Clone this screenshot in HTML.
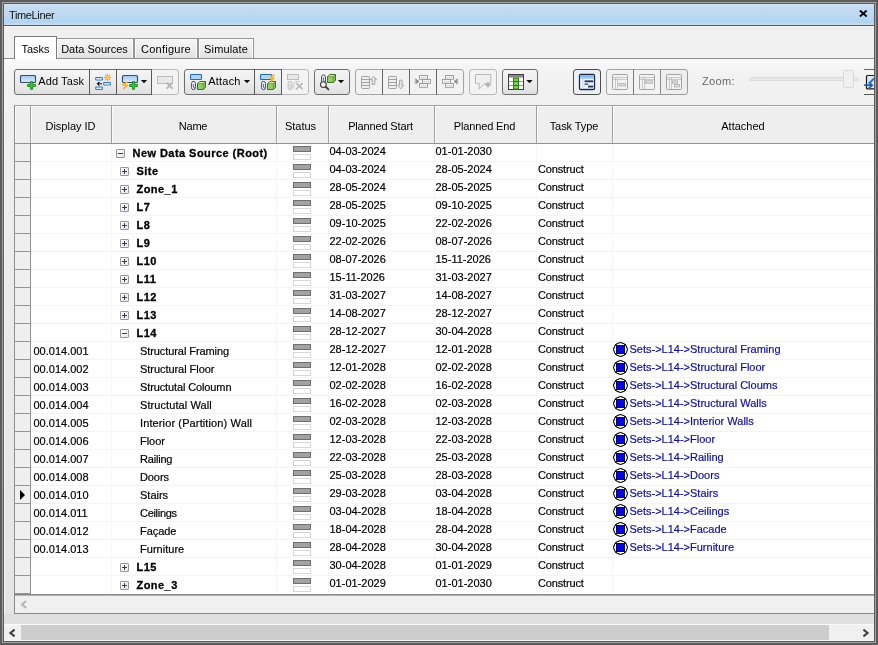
<!DOCTYPE html>
<html><head><meta charset="utf-8"><title>TimeLiner</title>
<style>
*{box-sizing:border-box;margin:0;padding:0}
html,body{width:878px;height:645px;overflow:hidden}
body{position:relative;background:#5c5c5c;font-family:"Liberation Sans",sans-serif;font-size:11px;color:#000}
.abs{position:absolute}
#frame2{position:absolute;left:2px;top:2px;width:874px;height:641px;border:1px solid #a0a0a0}
#frame3{position:absolute;left:3px;top:3px;width:872px;height:639px;border:1px solid #5c5c5c}
#win{position:absolute;left:4px;top:4px;width:870px;height:637px;background:#f0f0f0;overflow:hidden}
#title{position:absolute;left:0;top:0;width:870px;height:21px;background:linear-gradient(#d3e5f7 0,#c5dcf3 2px,#c1d9f1 9px,#b3d3f2 18px,#b7d6f2 19px,#cde0f2 21px)}
#title span{position:absolute;left:5px;top:5px;font-size:11px;letter-spacing:-0.36px;color:#111;white-space:nowrap;will-change:transform}
#tline{position:absolute;left:0;top:21px;width:870px;height:1px;background:#4e5660}
#tline2{position:absolute;left:0;top:22px;width:870px;height:1px;background:#f8f8f8}
/* coordinates below are relative to #root which is page-origin */
#root{position:absolute;left:-4px;top:-4px;width:878px;height:645px;will-change:transform}
.tab{position:absolute;top:38px;height:20px;border:1px solid #969696;border-bottom:none;background:linear-gradient(#f5f5f5,#ebebeb 60%,#e2e2e2);font-size:11px;text-align:center;line-height:21px;white-space:nowrap;box-shadow:inset 1px 1px 0 #fbfbfb,inset -1px 0 0 #fbfbfb}
.tab.act{box-shadow:none;top:36px;height:23px;border-color:#7c7c7c;background:#fff;line-height:25px;z-index:2}
#tabline{position:absolute;left:4px;top:58px;width:870px;height:1px;background:#8e8e8e}
#tabbody{position:absolute;left:4px;top:59px;width:870px;height:555px;background:linear-gradient(#f9f9f9,#f2f2f2 14px,#f0f0f0 46px,#ebebeb 250px,#e5e5e5 555px)}
#lstrip{position:absolute;left:4px;top:59px;width:1px;height:582px;background:#f6f6f6}
.hdr{position:absolute;top:105px;height:39px;border:1px solid #a0a0a0;border-bottom-color:#929292;border-left:none;background:#eee;box-shadow:inset 1px 1px 0 #fbfbfb;text-align:center;line-height:41px;white-space:nowrap;font-size:11px}
#grid{position:absolute;left:31px;top:144px;width:847px;height:450px;background:#fff}
.row{position:absolute;left:0;width:878px;height:18px}
.row .sel{position:absolute;left:14px;top:0;width:17px;height:18px;background:#efefef;border-left:1px solid #909090;border-right:1px solid #909090;border-bottom:1px solid #949494}
.t{position:absolute;white-space:nowrap;font-size:11px;line-height:13px;-webkit-text-stroke:0.2px}
.t.d{top:1px}
.t.id{left:33.5px;top:3px}
.t.nm{top:3px}
.t.b{font-weight:bold;letter-spacing:0.45px;-webkit-text-stroke:0.3px;margin-left:-0.5px}
.t.att{left:629.5px;color:#10109a}
.vline{position:absolute;top:144px;width:1px;height:450px;background:#f5f5f5}
.hline{position:absolute;left:31px;width:847px;height:1px;background:#f4f4f4}
.st1{position:absolute;left:293px;top:2px;width:18px;height:6px;background:#a2a2a2;border:1px solid #6e6e6e}
.st2{position:absolute;left:293px;top:10px;width:18px;height:6px;background:#fff;border:1px solid #d6d6d6}
.box{position:absolute;top:5px;width:9px;height:9px;border:1px solid #969696;background:linear-gradient(135deg,#fff,#e4e4ec);border-radius:1px}
.box:before{content:"";position:absolute;left:1px;top:3px;width:5px;height:1px;background:#3a3a4a}
.box.plus:after{content:"";position:absolute;left:3px;top:1px;width:1px;height:5px;background:#3a3a4a}
.cur{position:absolute;left:20px;top:4px;width:0;height:0;border-left:5px solid #000;border-top:5px solid transparent;border-bottom:5px solid transparent}
.seti{position:absolute;left:613px;top:0px;width:15px;height:15px;border-radius:50%;background:radial-gradient(circle at 7.5px 7.5px,#fff 0,#fff 5.9px,#161616 6.4px,#161616 7.1px,rgba(22,22,22,0) 7.7px)}
.seti:after{content:"";position:absolute;box-sizing:border-box;left:3px;top:3px;width:9px;height:9px;background:#0606e0;border:1px solid #0c0c48}
</style></head><body>
<div id="frame2"></div><div id="frame3"></div>
<div id="win">
<div id="title"><span>TimeLiner</span>
<svg class="abs" style="left:853px;top:5px" width="11" height="11" viewBox="0 0 11 11"><path d="M2.9 1.5L9.7 7.5M9.7 1.5L2.9 7.5" stroke="#0c0c0c" stroke-width="1.9" fill="none"/></svg>
</div>
<div id="tline"></div><div id="tline2"></div>
<div id="root">
<div id="tabline"></div>
<div id="tabbody"></div><div id="lstrip"></div>
<div class="tab act" style="left:14px;width:43px">Tasks</div>
<div class="tab" style="left:56px;width:78px;padding-right:1px">Data Sources</div>
<div class="tab" style="left:134px;width:64px;letter-spacing:0.25px">Configure</div>
<div class="tab" style="left:198px;width:56px;letter-spacing:0.12px">Simulate</div>
<svg class="abs" style="left:0;top:62px" width="878" height="40" viewBox="0 62 878 40">
<defs>
<linearGradient id="gb" x1="0" y1="0" x2="0" y2="1"><stop offset="0" stop-color="#f5f5f5"/><stop offset="0.5" stop-color="#ececec"/><stop offset="1" stop-color="#dfdfdf"/></linearGradient>
<linearGradient id="gp" x1="0" y1="0" x2="0" y2="1"><stop offset="0" stop-color="#e9eef6"/><stop offset="0.5" stop-color="#f1f3f7"/><stop offset="1" stop-color="#ececf0"/></linearGradient>
<linearGradient id="gblue" x1="0" y1="0" x2="0" y2="1"><stop offset="0" stop-color="#9cc6f2"/><stop offset="1" stop-color="#e2eefa"/></linearGradient>
<linearGradient id="ggreen" x1="0" y1="0" x2="1" y2="1"><stop offset="0" stop-color="#a8d47c"/><stop offset="1" stop-color="#5c9a32"/></linearGradient>
</defs>
<path d="M17.1 69.5H151.5V94.5H17.1Q14.5 94.5 14.5 91.9V72.1Q14.5 69.5 17.1 69.5Z" fill="url(#gb)" stroke="#6c6c6c"/>
<path d="M151.5 69.5H175.9Q178.5 69.5 178.5 72.1V91.9Q178.5 94.5 175.9 94.5H151.5V69.5Z" fill="#f3f3f3" stroke="#b8b8b8"/>
<rect x="151" y="69" width="1" height="26" fill="#5a5a5a"/>
<rect x="89" y="69" width="1" height="26" fill="#5a5a5a"/>
<rect x="116" y="69" width="1" height="26" fill="#5a5a5a"/>
<rect x="20.5" y="75.5" width="15" height="7" rx="1" fill="url(#gblue)" stroke="#30507c" stroke-width="1.2"/>
<path d="M30.4 81.5h2.2v2.8h2.8v2.2h-2.8v2.8h-2.2v-2.8h-2.8v-2.2h2.8Z" fill="#35c435" stroke="#1c8c1c" stroke-width="0.9" stroke-linejoin="round"/>
<text x="38.2" y="85" font-family="Liberation Sans, sans-serif" font-size="11" letter-spacing="0.12" fill="#000">Add Task</text>
<rect x="95.2" y="77.1" width="7.700000000000003" height="3.4000000000000057" rx="1" fill="#3474c0"/><rect x="96.2" y="78.0" width="5.700000000000003" height="1.6000000000000056" fill="#d8ecfe"/>
<rect x="103.2" y="82.1" width="7.700000000000003" height="3.4000000000000057" rx="1" fill="#3474c0"/><rect x="104.2" y="83.0" width="5.700000000000003" height="1.6000000000000056" fill="#d8ecfe"/>
<rect x="95.2" y="86.6" width="7.700000000000003" height="3.4000000000000057" rx="1" fill="#3474c0"/><rect x="96.2" y="87.5" width="5.700000000000003" height="1.6000000000000056" fill="#d8ecfe"/>
<path d="M102 83.8H97.6M99.4 82L97.4 83.8L99.4 85.6" stroke="#111" stroke-width="1.1" fill="none"/>
<g stroke="#f39c1f" stroke-width="1.1" stroke-linecap="round"><path d="M107.6 74.2V80.8M104.3 77.5H110.9M105.3 75.2L109.9 79.8M109.9 75.2L105.3 79.8"/></g><circle cx="107.6" cy="77.5" r="1.3" fill="#ffe08a"/>
<rect x="122.5" y="75.5" width="15" height="7" rx="1" fill="url(#gblue)" stroke="#30507c" stroke-width="1.2"/>
<path d="M127.4 81.8L122.8 85H127.2L123.2 88.8" fill="none" stroke="#f7b02c" stroke-width="1.6" stroke-linejoin="round"/>
<path d="M132.4 81.5h2.2v2.8h2.8v2.2h-2.8v2.8h-2.2v-2.8h-2.8v-2.2h2.8Z" fill="#35c435" stroke="#1c8c1c" stroke-width="0.9" stroke-linejoin="round"/>
<path d="M140.8 80H147.2L144 83.3Z" fill="#111"/>
<rect x="157.5" y="76.5" width="15" height="7" fill="#e9e9e9" stroke="#bcbcbc"/>
<path d="M166.6 82.6L172.6 88.6M172.6 82.6L166.6 88.6" stroke="#b6b6b6" stroke-width="1.7"/>
<path d="M187.1 69.5H281.5V94.5H187.1Q184.5 94.5 184.5 91.9V72.1Q184.5 69.5 187.1 69.5Z" fill="url(#gb)" stroke="#6c6c6c"/>
<path d="M281.5 69.5H305.9Q308.5 69.5 308.5 72.1V91.9Q308.5 94.5 305.9 94.5H281.5V69.5Z" fill="#f3f3f3" stroke="#b8b8b8"/>
<rect x="254" y="69" width="1" height="26" fill="#5a5a5a"/>
<rect x="281" y="69" width="1" height="26" fill="#5a5a5a"/>
<rect x="190.5" y="74.5" width="11" height="5" rx="0.8" fill="#acd6fa" stroke="#2c68a6" stroke-width="1.1"/>
<path d="M191.6 83.3a1.9 1.9 0 0 1 3.8 0V87.7a1.9 1.9 0 0 1 -3.8 0Z" fill="#fdfdff" stroke="#2c4874" stroke-width="1.0"/>
<path d="M193.4 84.2V87.1a0.9 0.9 0 0 0 1.6 0.5" fill="none" stroke="#2c5a9a" stroke-width="0.9" stroke-linecap="round"/>
<path d="M197.5 83.7L199.7 81.5H205.5L203.3 83.7Z" fill="#c6e8a8"/>
<path d="M203.3 83.7L205.5 81.5V87.3L203.3 89.5Z" fill="#84be54"/>
<rect x="197.5" y="83.7" width="5.8" height="5.8" fill="#96cc68"/>
<path d="M197.5 83.7L199.7 81.5H205.5V87.3L203.3 89.5H197.5Z" fill="none" stroke="#387620" stroke-width="1.0" stroke-linejoin="round"/>
<path d="M197.5 83.7H203.3V89.5M203.3 83.7L205.5 81.5" fill="none" stroke="#387620" stroke-width="0.7" opacity="0.8"/>
<text x="208.3" y="85" font-family="Liberation Sans, sans-serif" font-size="11" letter-spacing="0.2" fill="#000">Attach</text>
<path d="M243.8 80H250.2L247 83.3Z" fill="#111"/>
<rect x="260.5" y="74.5" width="11" height="5" rx="0.8" fill="#acd6fa" stroke="#2c68a6" stroke-width="1.1"/>
<path d="M261.6 83.3a1.9 1.9 0 0 1 3.8 0V87.7a1.9 1.9 0 0 1 -3.8 0Z" fill="#fdfdff" stroke="#2c4874" stroke-width="1.0"/>
<path d="M263.4 84.2V87.1a0.9 0.9 0 0 0 1.6 0.5" fill="none" stroke="#2c5a9a" stroke-width="0.9" stroke-linecap="round"/>
<path d="M267.5 83.7L269.7 81.5H275.5L273.3 83.7Z" fill="#c6e8a8"/>
<path d="M273.3 83.7L275.5 81.5V87.3L273.3 89.5Z" fill="#84be54"/>
<rect x="267.5" y="83.7" width="5.8" height="5.8" fill="#96cc68"/>
<path d="M267.5 83.7L269.7 81.5H275.5V87.3L273.3 89.5H267.5Z" fill="none" stroke="#387620" stroke-width="1.0" stroke-linejoin="round"/>
<path d="M267.5 83.7H273.3V89.5M273.3 83.7L275.5 81.5" fill="none" stroke="#387620" stroke-width="0.7" opacity="0.8"/>
<path d="M274.4 74.4L270.2 78.2H273.8L271.2 81.4" fill="none" stroke="#f4b832" stroke-width="1.9" stroke-linejoin="round"/>
<rect x="287.5" y="74.5" width="11" height="5" fill="#e9e9e9" stroke="#bcbcbc"/>
<path d="M288.1 83.3a1.9 1.9 0 0 1 3.8 0V87.7a1.9 1.9 0 0 1 -3.8 0Z" fill="#f4f4f4" stroke="#b8b8b8" stroke-width="1.0"/>
<path d="M289.9 84.2V87.1a0.9 0.9 0 0 0 1.6 0.5" fill="none" stroke="#c0c0c0" stroke-width="0.9" stroke-linecap="round"/>
<path d="M296.2 83.2L302.6 89.2M302.6 83.2L296.2 89.2" stroke="#b8b8b8" stroke-width="1.7"/><path d="M300 81.5H296Q293.4 82 293.6 85.5Q293.6 88.5 295 89.5" stroke="#c8c8c8" fill="none"/>
<path d="M317.1 69.5H346.9Q349.5 69.5 349.5 72.1V91.9Q349.5 94.5 346.9 94.5H317.1Q314.5 94.5 314.5 91.9V72.1Q314.5 69.5 317.1 69.5Z" fill="url(#gb)" stroke="#6c6c6c"/>
<path d="M321.6 76.8a1.9 1.9 0 0 1 3.8 0V81.2a1.9 1.9 0 0 1 -3.8 0Z" fill="#fdfdff" stroke="#2c4874" stroke-width="1.0"/>
<path d="M323.4 77.7V80.6a0.9 0.9 0 0 0 1.6 0.5" fill="none" stroke="#2c5a9a" stroke-width="0.9" stroke-linecap="round"/>
<path d="M327.5 76.7L329.7 74.5H335.5L333.3 76.7Z" fill="#c6e8a8"/>
<path d="M333.3 76.7L335.5 74.5V80.3L333.3 82.5Z" fill="#84be54"/>
<rect x="327.5" y="76.7" width="5.8" height="5.8" fill="#96cc68"/>
<path d="M327.5 76.7L329.7 74.5H335.5V80.3L333.3 82.5H327.5Z" fill="none" stroke="#387620" stroke-width="1.0" stroke-linejoin="round"/>
<path d="M327.5 76.7H333.3V82.5M333.3 76.7L335.5 74.5" fill="none" stroke="#387620" stroke-width="0.7" opacity="0.8"/>
<circle cx="323.4" cy="84.6" r="2.9" fill="#f6f6fa" stroke="#3a3a3a" stroke-width="1.1"/><path d="M325.8 86.9L328.4 89.4" stroke="#3a3a3a" stroke-width="1.9" stroke-linecap="round"/>
<path d="M337.8 80H344.2L341 83.3Z" fill="#111"/>
<path d="M358.1 69.5H460.9Q463.5 69.5 463.5 72.1V91.9Q463.5 94.5 460.9 94.5H358.1Q355.5 94.5 355.5 91.9V72.1Q355.5 69.5 358.1 69.5Z" fill="#f2f2f2" stroke="#a4a4a4"/>
<rect x="382" y="69" width="1" height="26" fill="#666"/>
<rect x="409" y="69" width="1" height="26" fill="#666"/>
<rect x="436" y="69" width="1" height="26" fill="#666"/>
<rect x="361.5" y="76.5" width="8" height="12" rx="0.8" fill="#efefef" stroke="#a2a2a2"/>
<rect x="362" y="79" width="7" height="1" fill="#a2a2a2"/>
<rect x="362" y="82" width="7" height="1" fill="#a2a2a2"/>
<rect x="362" y="85" width="7" height="1" fill="#a2a2a2"/>
<path d="M373.5 76.2L376.6 79.7H374.8V84.5H372.2V79.7H370.4Z" fill="#e6e6e6" stroke="#a2a2a2" stroke-width="0.9" stroke-linejoin="round"/>
<rect x="388.5" y="76.5" width="8" height="12" rx="0.8" fill="#efefef" stroke="#a2a2a2"/>
<rect x="389" y="79" width="7" height="1" fill="#a2a2a2"/>
<rect x="389" y="82" width="7" height="1" fill="#a2a2a2"/>
<rect x="389" y="85" width="7" height="1" fill="#a2a2a2"/>
<path d="M400.8 88.8L403.8 85.2H402.1V80.2H399.5V85.2H397.8Z" fill="#e6e6e6" stroke="#a2a2a2" stroke-width="0.9" stroke-linejoin="round"/>
<rect x="419.5" y="75.5" width="8" height="3.8" fill="#f3f3f3" stroke="#989898" stroke-width="0.9"/>
<path d="M421 77.4H426" stroke="#c4c4c4" stroke-width="0.8" stroke-dasharray="1.2 0.8"/>
<rect x="422.5" y="79.5" width="8" height="3.8" fill="#f3f3f3" stroke="#989898" stroke-width="0.9"/>
<path d="M424 81.4H429" stroke="#c4c4c4" stroke-width="0.8" stroke-dasharray="1.2 0.8"/>
<rect x="419.5" y="83.5" width="8" height="3.8" fill="#f3f3f3" stroke="#989898" stroke-width="0.9"/>
<path d="M421 85.4H426" stroke="#c4c4c4" stroke-width="0.8" stroke-dasharray="1.2 0.8"/>
<path d="M414.4 81.4L416 81.4M415.6 79L419 81.4L415.6 83.8L416.4 81.4Z" fill="#8a8a8a" stroke="#8a8a8a" stroke-width="0.8" stroke-linejoin="round"/>
<rect x="445.5" y="75.5" width="8" height="3.8" fill="#f3f3f3" stroke="#989898" stroke-width="0.9"/>
<path d="M447 77.4H452" stroke="#c4c4c4" stroke-width="0.8" stroke-dasharray="1.2 0.8"/>
<rect x="442.5" y="79.5" width="8" height="3.8" fill="#f3f3f3" stroke="#989898" stroke-width="0.9"/>
<path d="M444 81.4H449" stroke="#c4c4c4" stroke-width="0.8" stroke-dasharray="1.2 0.8"/>
<rect x="445.5" y="83.5" width="8" height="3.8" fill="#f3f3f3" stroke="#989898" stroke-width="0.9"/>
<path d="M447 85.4H452" stroke="#c4c4c4" stroke-width="0.8" stroke-dasharray="1.2 0.8"/>
<path d="M458.6 81.4L457 81.4M457.4 79L454 81.4L457.4 83.8L456.6 81.4Z" fill="#8a8a8a" stroke="#8a8a8a" stroke-width="0.8" stroke-linejoin="round"/>
<path d="M472.1 69.5H493.9Q496.5 69.5 496.5 72.1V91.9Q496.5 94.5 493.9 94.5H472.1Q469.5 94.5 469.5 91.9V72.1Q469.5 69.5 472.1 69.5Z" fill="#f3f3f3" stroke="#b8b8b8"/>
<path d="M475.5 74.5H490.8V83.3H484.8L479.2 89.2V83.3H475.5Z" fill="#f0f0f0" stroke="#b8b8b8" stroke-linejoin="round"/>
<path d="M487.9 82.2V87.6M485.2 84.9H490.6" stroke="#b0b0b0" stroke-width="1.6"/>
<path d="M505.1 69.5H534.9Q537.5 69.5 537.5 72.1V91.9Q537.5 94.5 534.9 94.5H505.1Q502.5 94.5 502.5 91.9V72.1Q502.5 69.5 505.1 69.5Z" fill="url(#gb)" stroke="#6c6c6c"/>
<rect x="508.5" y="74.5" width="15" height="15" fill="#fff" stroke="#3c3c3c"/>
<rect x="509" y="75" width="14" height="2.6" fill="#8a8a8a"/>
<rect x="513.5" y="78" width="5" height="11" fill="#7ccf4f" stroke="#2f7d1a"/>
<path d="M509 81.5H523M509 85.5H523" stroke="#2f6d22" stroke-width="1"/>
<path d="M509 81.5H513M519 81.5H523M509 85.5H513M519 85.5H523" stroke="#9a9a9a" stroke-width="1"/>
<path d="M526.3 80H532.7L529.5 83.3Z" fill="#111"/>
<path d="M576.1 69.5H597.9Q600.5 69.5 600.5 72.1V91.9Q600.5 94.5 597.9 94.5H576.1Q573.5 94.5 573.5 91.9V72.1Q573.5 69.5 576.1 69.5Z" fill="url(#gp)" stroke="#4c4c4c"/>
<rect x="579.5" y="74.5" width="15" height="15" rx="1.2" fill="#fff" stroke="#1a2846" stroke-width="1.3"/>
<rect x="580.2" y="75.2" width="13.6" height="2.6" fill="#86b8f0"/>
<path d="M580.2 78.6H593.8" stroke="#9cc4f2" stroke-width="0.9"/>
<path d="M580.2 81.2H593.8M580.2 83.8H593.8M580.2 86.4H593.8M582.6 78V89M584 78V89" stroke="#b8d4f6" stroke-width="0.6" fill="none"/>
<rect x="584.6" y="80.4" width="8.6" height="1.9" fill="#1d3566"/><rect x="584.6" y="83.6" width="3.6" height="1.3" fill="#2c4a86"/><rect x="588" y="85.6" width="5.2" height="1.9" fill="#1d3566"/>
<path d="M609.1 69.5H660.5V94.5H609.1Q606.5 94.5 606.5 91.9V72.1Q606.5 69.5 609.1 69.5Z" fill="#f2f2f2" stroke="#a4a4a4"/>
<path d="M660.5 69.5H684.9Q687.5 69.5 687.5 72.1V91.9Q687.5 94.5 684.9 94.5H660.5V69.5Z" fill="#eeeeee" stroke="#9a9a9a"/>
<rect x="633" y="69" width="1" height="26" fill="#7a7a7a"/>
<rect x="660" y="69" width="1" height="26" fill="#8a8a8a"/>
<rect x="612.5" y="74.5" width="15" height="15" rx="0.8" fill="#f2f2f2" stroke="#a4a4a4"/>
<path d="M613 77.5H627M613 79.5H627M615.5 77.5V89M617.5 77.5V89" stroke="#bebebe" stroke-width="0.8" fill="none"/>
<rect x="619" y="83.5" width="6.5" height="2.4" fill="#e0e0e0" stroke="#acacac" stroke-width="0.8"/>
<rect x="639.5" y="74.5" width="15" height="15" rx="0.8" fill="#f2f2f2" stroke="#a4a4a4"/>
<path d="M640 77.5H654M640 79.5H654M642.5 77.5V89M644.5 77.5V89" stroke="#bebebe" stroke-width="0.8" fill="none"/>
<rect x="645.5" y="80.8" width="7" height="2.4" fill="#e0e0e0" stroke="#acacac" stroke-width="0.8"/>
<rect x="666.5" y="74.5" width="15" height="15" rx="0.8" fill="#f2f2f2" stroke="#a4a4a4"/>
<path d="M667 77.5H681M667 79.5H681M669.5 77.5V89M671.5 77.5V89" stroke="#bebebe" stroke-width="0.8" fill="none"/>
<rect x="672.5" y="80.8" width="5" height="2.4" fill="#e0e0e0" stroke="#acacac" stroke-width="0.8"/>
<rect x="674.5" y="84.5" width="5" height="2.4" fill="#e0e0e0" stroke="#acacac" stroke-width="0.8"/>
<text x="702" y="85" font-family="Liberation Sans, sans-serif" font-size="11" letter-spacing="0.35" fill="#6a6a6a">Zoom:</text>
<rect x="749.5" y="77.5" width="109" height="3" rx="1.5" fill="#e8e8e8" stroke="#dcdcdc"/>
<rect x="843.5" y="70.5" width="10" height="17" rx="1" fill="#f0f0f0" stroke="#dadada"/>
<rect x="864" y="69" width="10" height="1" fill="#666"/><rect x="864" y="94" width="10" height="1" fill="#555"/>
<rect x="864" y="70" width="10" height="24" fill="#f6f4f0"/>
<rect x="866.5" y="75.5" width="10" height="13.4" rx="1" fill="#d8eafa" stroke="#1a1a1a" stroke-width="1.2"/>
<path d="M864.8 85.2H871M869.3 82.6L872.2 85.2L869.3 87.8" fill="none" stroke="#1f5fb4" stroke-width="1.8" stroke-linecap="round"/><path d="M870 82.5L874 78.5" stroke="#2f6fc0" stroke-width="2"/>
</svg>
<div class="hdr" style="left:14px;width:17px;border-left:1px solid #8c8c8c"></div>
<div class="hdr" style="left:31px;width:81px;padding-right:1px">Display ID</div>
<div class="hdr" style="left:112px;width:165px;padding-right:2px;letter-spacing:-0.2px">Name</div>
<div class="hdr" style="left:277px;width:52px;padding-right:4px">Status</div>
<div class="hdr" style="left:329px;width:106px;padding-right:2px;letter-spacing:-0.15px">Planned Start</div>
<div class="hdr" style="left:435px;width:102px;padding-right:2px;letter-spacing:-0.15px">Planned End</div>
<div class="hdr" style="left:537px;width:76px;padding-right:1px;letter-spacing:-0.08px">Task Type</div>
<div class="hdr" style="left:613px;width:265px;border-right:none;padding-right:5px">Attached</div>
<div id="grid"></div>
<div class="vline" style="left:111px"></div>
<div class="vline" style="left:276px"></div>
<div class="vline" style="left:328px"></div>
<div class="vline" style="left:434px"></div>
<div class="vline" style="left:536px"></div>
<div class="vline" style="left:612px"></div>
<div class="hline" style="top:161px"></div>
<div class="hline" style="top:179px"></div>
<div class="hline" style="top:197px"></div>
<div class="hline" style="top:215px"></div>
<div class="hline" style="top:233px"></div>
<div class="hline" style="top:251px"></div>
<div class="hline" style="top:269px"></div>
<div class="hline" style="top:287px"></div>
<div class="hline" style="top:305px"></div>
<div class="hline" style="top:323px"></div>
<div class="hline" style="top:341px"></div>
<div class="hline" style="top:359px"></div>
<div class="hline" style="top:377px"></div>
<div class="hline" style="top:395px"></div>
<div class="hline" style="top:413px"></div>
<div class="hline" style="top:431px"></div>
<div class="hline" style="top:449px"></div>
<div class="hline" style="top:467px"></div>
<div class="hline" style="top:485px"></div>
<div class="hline" style="top:503px"></div>
<div class="hline" style="top:521px"></div>
<div class="hline" style="top:539px"></div>
<div class="hline" style="top:557px"></div>
<div class="hline" style="top:575px"></div>
<div class="row" style="top:144px">
<div class="sel"></div>
<div class="box minus" style="left:116px"></div>
<span class="t nm b" style="left:133px">New Data Source (Root)</span>
<div class="st1"></div><div class="st2"></div>
<span class="t d" style="left:329.5px">04-03-2024</span>
<span class="t d" style="left:435.5px">01-01-2030</span>
</div>
<div class="row" style="top:162px">
<div class="sel"></div>
<div class="box plus" style="left:120px"></div>
<span class="t nm b" style="left:137px">Site</span>
<div class="st1"></div><div class="st2"></div>
<span class="t d" style="left:329.5px">04-03-2024</span>
<span class="t d" style="left:435.5px">28-05-2024</span>
<span class="t d" style="left:538px;letter-spacing:-0.15px">Construct</span>
</div>
<div class="row" style="top:180px">
<div class="sel"></div>
<div class="box plus" style="left:120px"></div>
<span class="t nm b" style="left:137px">Zone_1</span>
<div class="st1"></div><div class="st2"></div>
<span class="t d" style="left:329.5px">28-05-2024</span>
<span class="t d" style="left:435.5px">28-05-2025</span>
<span class="t d" style="left:538px;letter-spacing:-0.15px">Construct</span>
</div>
<div class="row" style="top:198px">
<div class="sel"></div>
<div class="box plus" style="left:120px"></div>
<span class="t nm b" style="left:137px">L7</span>
<div class="st1"></div><div class="st2"></div>
<span class="t d" style="left:329.5px">28-05-2025</span>
<span class="t d" style="left:435.5px">09-10-2025</span>
<span class="t d" style="left:538px;letter-spacing:-0.15px">Construct</span>
</div>
<div class="row" style="top:216px">
<div class="sel"></div>
<div class="box plus" style="left:120px"></div>
<span class="t nm b" style="left:137px">L8</span>
<div class="st1"></div><div class="st2"></div>
<span class="t d" style="left:329.5px">09-10-2025</span>
<span class="t d" style="left:435.5px">22-02-2026</span>
<span class="t d" style="left:538px;letter-spacing:-0.15px">Construct</span>
</div>
<div class="row" style="top:234px">
<div class="sel"></div>
<div class="box plus" style="left:120px"></div>
<span class="t nm b" style="left:137px">L9</span>
<div class="st1"></div><div class="st2"></div>
<span class="t d" style="left:329.5px">22-02-2026</span>
<span class="t d" style="left:435.5px">08-07-2026</span>
<span class="t d" style="left:538px;letter-spacing:-0.15px">Construct</span>
</div>
<div class="row" style="top:252px">
<div class="sel"></div>
<div class="box plus" style="left:120px"></div>
<span class="t nm b" style="left:137px">L10</span>
<div class="st1"></div><div class="st2"></div>
<span class="t d" style="left:329.5px">08-07-2026</span>
<span class="t d" style="left:435.5px">15-11-2026</span>
<span class="t d" style="left:538px;letter-spacing:-0.15px">Construct</span>
</div>
<div class="row" style="top:270px">
<div class="sel"></div>
<div class="box plus" style="left:120px"></div>
<span class="t nm b" style="left:137px">L11</span>
<div class="st1"></div><div class="st2"></div>
<span class="t d" style="left:329.5px">15-11-2026</span>
<span class="t d" style="left:435.5px">31-03-2027</span>
<span class="t d" style="left:538px;letter-spacing:-0.15px">Construct</span>
</div>
<div class="row" style="top:288px">
<div class="sel"></div>
<div class="box plus" style="left:120px"></div>
<span class="t nm b" style="left:137px">L12</span>
<div class="st1"></div><div class="st2"></div>
<span class="t d" style="left:329.5px">31-03-2027</span>
<span class="t d" style="left:435.5px">14-08-2027</span>
<span class="t d" style="left:538px;letter-spacing:-0.15px">Construct</span>
</div>
<div class="row" style="top:306px">
<div class="sel"></div>
<div class="box plus" style="left:120px"></div>
<span class="t nm b" style="left:137px">L13</span>
<div class="st1"></div><div class="st2"></div>
<span class="t d" style="left:329.5px">14-08-2027</span>
<span class="t d" style="left:435.5px">28-12-2027</span>
<span class="t d" style="left:538px;letter-spacing:-0.15px">Construct</span>
</div>
<div class="row" style="top:324px">
<div class="sel"></div>
<div class="box minus" style="left:120px"></div>
<span class="t nm b" style="left:137px">L14</span>
<div class="st1"></div><div class="st2"></div>
<span class="t d" style="left:329.5px">28-12-2027</span>
<span class="t d" style="left:435.5px">30-04-2028</span>
<span class="t d" style="left:538px;letter-spacing:-0.15px">Construct</span>
</div>
<div class="row" style="top:342px">
<div class="sel"></div>
<span class="t id">00.014.001</span>
<span class="t nm" style="left:140px;letter-spacing:-0.08px">Structural Framing</span>
<div class="st1"></div><div class="st2"></div>
<span class="t d" style="left:329.5px">28-12-2027</span>
<span class="t d" style="left:435.5px">12-01-2028</span>
<span class="t d" style="left:538px;letter-spacing:-0.15px">Construct</span>
<div class="seti"></div><span class="t d att">Sets-&gt;L14-&gt;Structural Framing</span>
</div>
<div class="row" style="top:360px">
<div class="sel"></div>
<span class="t id">00.014.002</span>
<span class="t nm" style="left:140px;letter-spacing:-0.05px">Structural Floor</span>
<div class="st1"></div><div class="st2"></div>
<span class="t d" style="left:329.5px">12-01-2028</span>
<span class="t d" style="left:435.5px">02-02-2028</span>
<span class="t d" style="left:538px;letter-spacing:-0.15px">Construct</span>
<div class="seti"></div><span class="t d att">Sets-&gt;L14-&gt;Structural Floor</span>
</div>
<div class="row" style="top:378px">
<div class="sel"></div>
<span class="t id">00.014.003</span>
<span class="t nm" style="left:140px;letter-spacing:-0.12px">Structutal Coloumn</span>
<div class="st1"></div><div class="st2"></div>
<span class="t d" style="left:329.5px">02-02-2028</span>
<span class="t d" style="left:435.5px">16-02-2028</span>
<span class="t d" style="left:538px;letter-spacing:-0.15px">Construct</span>
<div class="seti"></div><span class="t d att">Sets-&gt;L14-&gt;Structural Cloums</span>
</div>
<div class="row" style="top:396px">
<div class="sel"></div>
<span class="t id">00.014.004</span>
<span class="t nm" style="left:140px;letter-spacing:0.08px">Structutal Wall</span>
<div class="st1"></div><div class="st2"></div>
<span class="t d" style="left:329.5px">16-02-2028</span>
<span class="t d" style="left:435.5px">02-03-2028</span>
<span class="t d" style="left:538px;letter-spacing:-0.15px">Construct</span>
<div class="seti"></div><span class="t d att">Sets-&gt;L14-&gt;Structural Walls</span>
</div>
<div class="row" style="top:414px">
<div class="sel"></div>
<span class="t id">00.014.005</span>
<span class="t nm" style="left:140px;letter-spacing:0.12px">Interior (Partition) Wall</span>
<div class="st1"></div><div class="st2"></div>
<span class="t d" style="left:329.5px">02-03-2028</span>
<span class="t d" style="left:435.5px">12-03-2028</span>
<span class="t d" style="left:538px;letter-spacing:-0.15px">Construct</span>
<div class="seti"></div><span class="t d att">Sets-&gt;L14-&gt;Interior Walls</span>
</div>
<div class="row" style="top:432px">
<div class="sel"></div>
<span class="t id">00.014.006</span>
<span class="t nm" style="left:140px;letter-spacing:-0.05px">Floor</span>
<div class="st1"></div><div class="st2"></div>
<span class="t d" style="left:329.5px">12-03-2028</span>
<span class="t d" style="left:435.5px">22-03-2028</span>
<span class="t d" style="left:538px;letter-spacing:-0.15px">Construct</span>
<div class="seti"></div><span class="t d att">Sets-&gt;L14-&gt;Floor</span>
</div>
<div class="row" style="top:450px">
<div class="sel"></div>
<span class="t id">00.014.007</span>
<span class="t nm" style="left:140px;letter-spacing:-0.2px">Railing</span>
<div class="st1"></div><div class="st2"></div>
<span class="t d" style="left:329.5px">22-03-2028</span>
<span class="t d" style="left:435.5px">25-03-2028</span>
<span class="t d" style="left:538px;letter-spacing:-0.15px">Construct</span>
<div class="seti"></div><span class="t d att">Sets-&gt;L14-&gt;Railing</span>
</div>
<div class="row" style="top:468px">
<div class="sel"></div>
<span class="t id">00.014.008</span>
<span class="t nm" style="left:140px;letter-spacing:-0.1px">Doors</span>
<div class="st1"></div><div class="st2"></div>
<span class="t d" style="left:329.5px">25-03-2028</span>
<span class="t d" style="left:435.5px">28-03-2028</span>
<span class="t d" style="left:538px;letter-spacing:-0.15px">Construct</span>
<div class="seti"></div><span class="t d att">Sets-&gt;L14-&gt;Doors</span>
</div>
<div class="row" style="top:486px">
<div class="sel"></div>
<div class="cur"></div>
<span class="t id">00.014.010</span>
<span class="t nm" style="left:140px;letter-spacing:0px">Stairs</span>
<div class="st1"></div><div class="st2"></div>
<span class="t d" style="left:329.5px">29-03-2028</span>
<span class="t d" style="left:435.5px">03-04-2028</span>
<span class="t d" style="left:538px;letter-spacing:-0.15px">Construct</span>
<div class="seti"></div><span class="t d att">Sets-&gt;L14-&gt;Stairs</span>
</div>
<div class="row" style="top:504px">
<div class="sel"></div>
<span class="t id">00.014.011</span>
<span class="t nm" style="left:140px;letter-spacing:-0.3px">Ceilings</span>
<div class="st1"></div><div class="st2"></div>
<span class="t d" style="left:329.5px">03-04-2028</span>
<span class="t d" style="left:435.5px">18-04-2028</span>
<span class="t d" style="left:538px;letter-spacing:-0.15px">Construct</span>
<div class="seti"></div><span class="t d att">Sets-&gt;L14-&gt;Ceilings</span>
</div>
<div class="row" style="top:522px">
<div class="sel"></div>
<span class="t id">00.014.012</span>
<span class="t nm" style="left:140px;letter-spacing:-0.05px">Façade</span>
<div class="st1"></div><div class="st2"></div>
<span class="t d" style="left:329.5px">18-04-2028</span>
<span class="t d" style="left:435.5px">28-04-2028</span>
<span class="t d" style="left:538px;letter-spacing:-0.15px">Construct</span>
<div class="seti"></div><span class="t d att">Sets-&gt;L14-&gt;Facade</span>
</div>
<div class="row" style="top:540px">
<div class="sel"></div>
<span class="t id">00.014.013</span>
<span class="t nm" style="left:140px;letter-spacing:0.02px">Furniture</span>
<div class="st1"></div><div class="st2"></div>
<span class="t d" style="left:329.5px">28-04-2028</span>
<span class="t d" style="left:435.5px">30-04-2028</span>
<span class="t d" style="left:538px;letter-spacing:-0.15px">Construct</span>
<div class="seti"></div><span class="t d att">Sets-&gt;L14-&gt;Furniture</span>
</div>
<div class="row" style="top:558px">
<div class="sel"></div>
<div class="box plus" style="left:120px"></div>
<span class="t nm b" style="left:137px">L15</span>
<div class="st1"></div><div class="st2"></div>
<span class="t d" style="left:329.5px">30-04-2028</span>
<span class="t d" style="left:435.5px">01-01-2029</span>
<span class="t d" style="left:538px;letter-spacing:-0.15px">Construct</span>
</div>
<div class="row" style="top:576px">
<div class="sel"></div>
<div class="box plus" style="left:120px"></div>
<span class="t nm b" style="left:137px">Zone_3</span>
<div class="st1"></div><div class="st2"></div>
<span class="t d" style="left:329.5px">01-01-2029</span>
<span class="t d" style="left:435.5px">01-01-2030</span>
<span class="t d" style="left:538px;letter-spacing:-0.15px">Construct</span>
</div>
<div class="abs" style="left:14px;top:594px;width:864px;height:1px;background:#888"></div><div class="abs" style="left:15px;top:595px;width:863px;height:1px;background:#b4b4b4;z-index:3"></div>
<div class="abs" style="left:14px;top:595px;width:864px;height:19px;background:#f0f0f0;border-left:1px solid #8a8a8a;border-bottom:1px solid #8a8a8a"></div>
<svg class="abs" style="left:20px;top:600px" width="8" height="9" viewBox="0 0 8 9"><path d="M6.2 1L2 4.5L6.2 8" stroke="#b4b4b4" stroke-width="2" fill="none"/></svg>
<div class="abs" style="left:4px;top:614px;width:870px;height:10px;background:#e0e0e0"></div>
<div class="abs" style="left:4px;top:624px;width:870px;height:17px;background:#f0f0f0;border-top:1px solid #fafafa;border-bottom:1px solid #f6f6f6"></div>
<div class="abs" style="left:21px;top:625px;width:808px;height:15px;background:#cdcdcd"></div>
<svg class="abs" style="left:8px;top:628px" width="8" height="10" viewBox="0 0 8 10"><path d="M6.6 1.6L2.4 5L6.6 8.4" stroke="#404040" stroke-width="2" fill="none"/></svg>
<svg class="abs" style="left:862px;top:628px" width="8" height="10" viewBox="0 0 8 10"><path d="M1.4 1.6L5.6 5L1.4 8.4" stroke="#404040" stroke-width="2" fill="none"/></svg>
</div>
</div>
</body></html>
